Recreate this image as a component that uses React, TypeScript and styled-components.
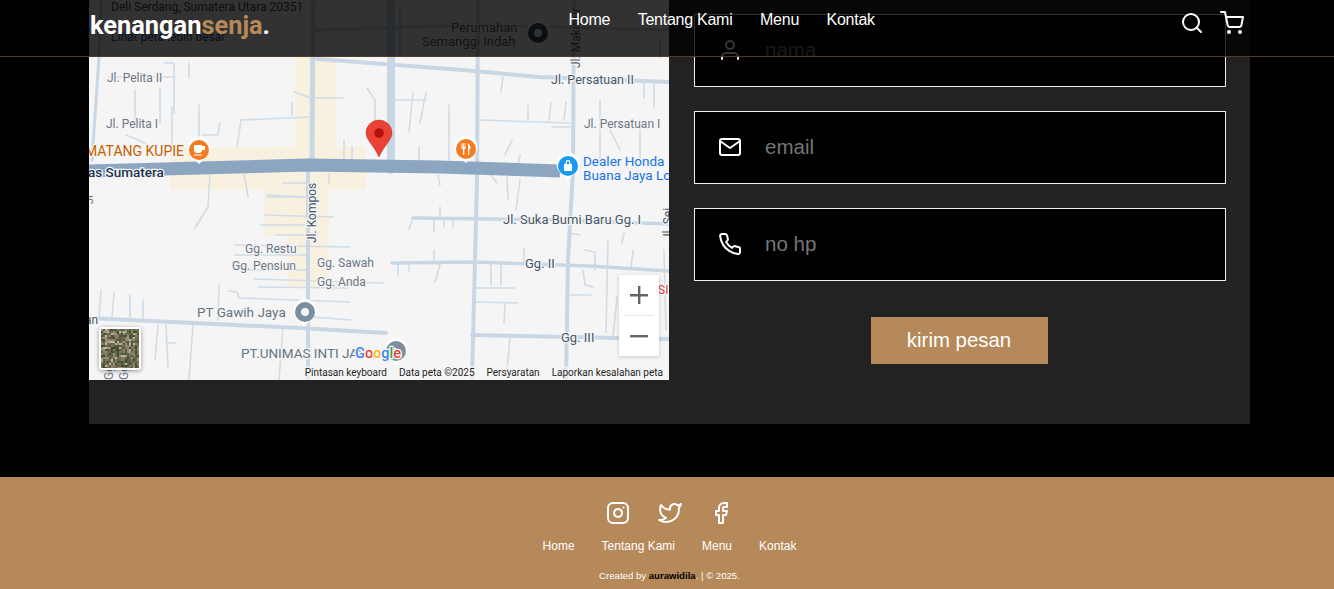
import React from "react";
import styled, { createGlobalStyle } from "styled-components";
import { FiUser, FiMail, FiPhone, FiSearch, FiShoppingCart, FiInstagram, FiTwitter, FiFacebook } from "react-icons/fi";

const Global = createGlobalStyle`
  html, body { margin: 0; padding: 0; background: #000; height: 100%; overflow: hidden; }
  body { font-family: "Liberation Sans", Arial, sans-serif; color: #fff; }
  * { box-sizing: border-box; }
`;

const Page = styled.div`
  position: relative;
  width: 1334px;
  height: 589px;
  overflow: hidden;
  background: #000;
`;

const Navbar = styled.nav`
  position: absolute;
  top: 0;
  left: 0;
  width: 100%;
  height: 57px;
  display: flex;
  align-items: flex-start;
  padding: 0 90px 0 90px;
  background: rgba(1, 1, 1, 0.8);
  border-bottom: 1px solid #513b27;
  z-index: 5;
`;

const Logo = styled.a`
  font-family: Roboto, sans-serif;
  font-weight: 700;
  font-size: 25.4px;
  line-height: 30px;
  margin-top: 10px;
  color: #fff;
  span { color: #b6895b; }
`;

const NavLinks = styled.div`
  display: flex;
  gap: 27.5px;
  margin-left: 298.5px;
  margin-top: 11px;
`;

const NavLink = styled.a`
  font-size: 16px;
  line-height: 18px;
  letter-spacing: -0.25px;
  color: #fff;
`;

const NavIcons = styled.div`
  display: flex;
  align-items: center;
  gap: 16px;
  margin-left: auto;
  margin-top: 11px;
  svg { display: block; }
`;

const Contact = styled.section`
  display: grid;
  grid-template-columns: 580px 1fr;
  width: 1161px;
  height: 424px;
  margin-left: 89px;
  background: #222;
`;

const MapFrame = styled.div`
  position: relative;
  width: 580px;
  height: 380px;
  overflow: hidden;
  background: #f5f5f5;
  svg { display: block; }
`;

const ZoomControl = styled.div`
  position: absolute;
  right: 10px;
  bottom: 24px;
  width: 40px;
  height: 81px;
  background: #fff;
  box-shadow: 0 1px 4px rgba(0, 0, 0, 0.2);
  display: flex;
  flex-direction: column;
  align-items: center;
  color: #666;
`;

const ZoomButton = styled.div`
  flex: 1;
  display: flex;
  align-items: center;
  justify-content: center;
`;

const ZoomDivider = styled.div`
  width: 30px;
  height: 1px;
  background: #e6e6e6;
`;

const SatelliteThumb = styled.div`
  position: absolute;
  left: 10px;
  bottom: 10px;
  width: 42px;
  height: 43px;
  border: 2px solid #fff;
  border-radius: 3px;
  overflow: hidden;
  background: #6f6b58;
  box-shadow: 0 1px 4px rgba(0, 0, 0, 0.4);
`;

const Attribution = styled.div`
  position: absolute;
  right: 0;
  bottom: 0;
  height: 14px;
  display: flex;
  gap: 12px;
  padding: 0 6px;
  font-family: Roboto, sans-serif;
  font-size: 10px;
  line-height: 14px;
  color: #1f1f1f;
  background: rgba(245, 245, 245, 0.7);
`;

const Form = styled.form`
  display: flex;
  flex-direction: column;
  padding: 14px 24px 0 25px;
`;

const Field = styled.label`
  display: flex;
  align-items: center;
  gap: 23px;
  height: 73px;
  margin-bottom: 24px;
  padding: 0 0 2px 23px;
  background: #000;
  border: 1px solid #eee;
  color: #fff;
  svg { flex: none; }
`;

const Input = styled.input`
  flex: 1;
  min-width: 0;
  background: transparent;
  border: 0;
  outline: 0;
  padding: 0;
  font-family: "Liberation Sans", Arial, sans-serif;
  font-size: 20.5px;
  color: #fff;
  &::placeholder { color: #757575; opacity: 1; }
`;

const SendButton = styled.button`
  align-self: center;
  width: 177px;
  height: 47px;
  margin: 12px 2px 0 0;
  padding: 0 0 1px;
  border: 0;
  background: #b6895b;
  color: #fff;
  font-family: "Liberation Sans", Arial, sans-serif;
  font-size: 20.4px;
`;

const Footer = styled.footer`
  display: flex;
  flex-direction: column;
  align-items: center;
  height: 112px;
  margin-top: 53px;
  padding: 24px 0 0 5px;
  background: #b6895b;
`;

const Socials = styled.div`
  display: flex;
  gap: 27.5px;
  color: #fff;
  svg { display: block; }
`;

const FooterLinks = styled.div`
  display: flex;
  gap: 27px;
  margin-top: 14px;
`;

const FooterLink = styled.a`
  font-size: 12px;
  line-height: 14px;
  color: #fff;
`;

const Credit = styled.p`
  margin: 17px 0 0;
  font-size: 9.6px;
  line-height: 12px;
  color: #fff;
  b { font-weight: 700; color: #000; }
`;

const ROAD = "#c9d7e4";
const ALLEY = "#d0dce7";

const bigRoads: [string, number][] = [
  ["391,0 391,170", 8],
  ["313,0 312,165", 5],
  ["308,165 308,380", 4],
  ["317,59 463,70 539,77 669,82", 4],
  ["478,0 477,180 472,380", 4],
  ["574,0 573,170 568,260 566,380", 4],
  ["92,160 99,57 101,0", 3],
  ["392,263 474,262 590,266 669,271", 3.5],
  ["413,218 560,220 669,224", 3.5],
  ["472,335 669,339", 4],
  ["89,318 300,328 386,333", 4],
  ["313,30 470,25 669,30", 3],
  ["400,10 400,55", 2],
  ["660,40 660,57", 2],
];

const alleys: string[] = [
  "164,63 174,63 174,113", "109,77 176,77", "189,63 189,78", "135,90 135,123", "160,88 160,123",
  "172,107 172,147", "199,105 199,147", "241,120 310,117", "241,120 237,147", "202,135 218,135 220,123",
  "126,135 145,143", "292,103 292,115", "311,98 344,98", "294,92 311,98", "367,88 375,100 375,123",
  "394,100 426,100", "413,93 409,132", "426,93 420,123", "449,105 449,160", "480,120 570,123",
  "503,77 501,92", "528,105 528,120", "551,103 549,120", "566,102 564,120", "552,127 571,127",
  "644,83 644,98", "654,83 654,107", "344,140 344,160", "352,147 352,160", "419,147 419,163",
  "512,140 505,155", "520,155 518,165", "610,130 620,150", "640,120 640,160", "600,100 600,160",
  "210,175 208,207 195,228", "244,173 248,197", "283,183 310,183", "267,197 310,197", "329,174 329,183",
  "438,175 440,185", "491,175 497,183", "507,177 508,200", "520,180 516,210",
  "266,195 310,197", "264,215 333,217", "260,225 310,225", "277,235 310,235", "235,245 350,247",
  "235,255 306,255", "241,270 306,270", "254,279 384,283", "258,287 348,288",
  "229,291 237,292 239,298 350,302", "313,317 351,320", "409,229 413,218", "440,207 440,218",
  "434,218 434,232", "444,218 444,227", "453,218 453,227", "398,262 398,275", "409,262 409,272",
  "434,250 434,262 440,265 435,282", "491,265 491,285", "501,265 501,285", "476,288 514,288",
  "476,302 518,303", "505,303 504,323", "510,338 507,370", "570,233 580,235", "583,270 585,285 593,287",
  "570,295 591,295", "585,250 595,252 595,270", "608,240 606,333", "617,297 613,337", "624,233 622,243",
  "633,250 631,268", "664,250 666,330", "524,248 524,262",
  "101,290 99,318", "114,292 112,318", "130,295 130,318", "143,300 143,320", "219,285 218,320",
  "158,325 155,360", "166,325 168,367", "168,343 176,343", "193,325 189,380", "283,328 279,380",
];

const Road = styled.polyline`
  fill: none;
  stroke-linejoin: round;
  stroke-linecap: round;
`;

const labelHalo = { paintOrder: "stroke", stroke: "#f5f5f5", strokeWidth: 2.5 } as const;

const Label = ({ x, y, c = "#6b7785", s = 12, w = 400, r, children }: { x: number; y: number; c?: string; s?: number; w?: number; r?: number; children: React.ReactNode }) => (
  <text x={x} y={y} fill={c} fontSize={s} fontWeight={w} fontFamily="Roboto, sans-serif" style={labelHalo} transform={r ? `rotate(${r} ${x} ${y})` : undefined}>
    {children}
  </text>
);

const Pin = ({ x, y, c, children }: { x: number; y: number; c: string; children?: React.ReactNode }) => (
  <g transform={`translate(${x} ${y})`}>
    <path d="M0 14 L-6 8 A11.5 11.5 0 1 1 6 8 Z" fill="#fff" />
    <circle r="10" fill={c} />
    {children}
  </g>
);

const MapDrawing = () => (
  <svg width="580" height="380" viewBox="89 0 580 380" xmlns="http://www.w3.org/2000/svg">
    <rect x="89" y="0" width="580" height="380" fill="#f5f5f5" />
    <g fill="#f8f1df">
      <rect x="295" y="57" width="40" height="95" />
      <rect x="170" y="147" width="196" height="43" />
      <rect x="264" y="190" width="65" height="46" />
      <rect x="287" y="236" width="42" height="52" />
    </g>
    {alleys.map((p, i) => <Road key={i} points={p} stroke={ALLEY} strokeWidth={1.6} />)}
    {bigRoads.map(([p, w], i) => <Road key={i} points={p} stroke={ROAD} strokeWidth={w} />)}
    <polyline points="89,171 200,168 308,165 440,167 560,171" fill="none" stroke="#8ca6c1" strokeWidth="13" />

    <Label x={111} y={11} c="#3c3c3c">Deli Serdang, Sumatera Utara 20351</Label>
    <Label x={111} y={41} c="#1a4e9e">Lihat peta lebih besar</Label>
    <Label x={451} y={32} s={13} c="#55606c">Perumahan</Label>
    <Label x={422} y={46} s={13} c="#55606c">Semanggi Indah</Label>
    <Pin x={538} y={33} c="#37474f"><circle r="4" fill="#f5f5f5" /></Pin>
    <Label x={580} y={68} c="#55606c" r={-90}>Jl. Makmur</Label>

    <Label x={107} y={82}>Jl. Pelita II</Label>
    <Label x={106} y={128}>Jl. Pelita I</Label>
    <Label x={551} y={84} s={12.5} c="#46566a">Jl. Persatuan II</Label>
    <Label x={584} y={128}>Jl. Persatuan I</Label>
    <Label x={85} y={156} s={14} c="#c95e00">MATANG KUPIE</Label>
    <Label x={88} y={177} s={13.5} w={500} c="#1c3350">as Sumatera</Label>
    <Label x={316} y={243} c="#46566a" r={-90}>Jl. Kompos</Label>
    <Label x={583} y={166} s={13.5} c="#1a73e8">Dealer Honda</Label>
    <Label x={583} y={180} s={13.5} c="#1a73e8">Buana Jaya Lo</Label>
    <Label x={503} y={224} s={13} c="#46566a">Jl. Suka Bumi Baru Gg. I</Label>
    <Label x={245} y={253}>Gg. Restu</Label>
    <Label x={232} y={270}>Gg. Pensiun</Label>
    <Label x={317} y={267}>Gg. Sawah</Label>
    <Label x={317} y={286}>Gg. Anda</Label>
    <Label x={525} y={268} s={13} c="#46566a">Gg. II</Label>
    <Label x={561} y={342} s={13} c="#46566a">Gg. III</Label>
    <Label x={197} y={317} s={13.5} c="#627585">PT Gawih Jaya</Label>
    <Label x={241} y={358} s={13.5} c="#627585">PT.UNIMAS INTI JAYA</Label>
    <Label x={85} y={324} c="#46566a">an</Label>
    <Label x={658} y={294} c="#e53935">SI</Label>
    <Label x={672} y={240} c="#46566a" r={-90}>Jl. Sei</Label>
    <Label x={113} y={380} c="#6b7785" r={-90}>Gg</Label>
    <Label x={128} y={380} c="#6b7785" r={-90}>Gg</Label>
    <Label x={93} y={204} c="#6b7785" s={11} r={-90}>Jl</Label>

    <Pin x={199} y={150} c="#f47b20">
      <path d="M-5 -5 H3 V1 A3 3 0 0 1 0 3 H-2 A3 3 0 0 1 -5 0 Z M3 -4 H6 V0 H3 M-5 4.5 H3 V5.5 H-5 Z" fill="#fff" />
    </Pin>
    <Pin x={466} y={149} c="#f47b20">
      <path d="M-4.5 -6 V-1.5 Q-4.5 0 -3 0.5 V6 H-1.7 V0.5 Q-0.5 0 -0.5 -1.5 V-6 H-1.3 V-2 H-2 V-6 H-2.8 V-2 H-3.5 V-6 Z M2 -6 Q4.5 -4 4.5 0 H3.3 V6 H2 Z" fill="#fff" />
    </Pin>
    <Pin x={568} y={166} c="#1a9bf0">
      <path d="M-4 -2 H4 V5 H-4 Z M-2.4 -2 V-3.5 A2.4 2.4 0 0 1 2.4 -3.5 V-2 H1.2 V-3.5 A1.2 1.2 0 0 0 -1.2 -3.5 V-2 Z" fill="#fff" />
    </Pin>
    <Pin x={305} y={312} c="#7a8f9e"><circle r="4" fill="#f5f5f5" /></Pin>
    <Pin x={396} y={351} c="#7a8f9e"><path d="M-2 -4 L4 0 L-2 4 Z" fill="#f5f5f5" /></Pin>

    <text x={355} y={358} fontSize="14.5" fontFamily="Roboto, sans-serif" fontWeight="500" style={labelHalo}>
      <tspan fill="#4285f4">G</tspan><tspan fill="#ea4335">o</tspan><tspan fill="#fbbc05">o</tspan><tspan fill="#4285f4">g</tspan><tspan fill="#34a853">l</tspan><tspan fill="#ea4335">e</tspan>
    </text>

    <path d="M379 157 C375 147 366 140 366 133 A13 13 0 0 1 392 133 C392 140 383 147 379 157 Z" fill="#ea4335" stroke="#c5221f" strokeWidth="0.5" />
    <circle cx="379" cy="133" r="4.8" fill="#b3120f" />
  </svg>
);

const satColors = ["#55603f", "#8f8069", "#46512f", "#a39580", "#66704e", "#75624f", "#bdb4a4", "#3d4a2f", "#857663", "#6c6a55", "#93876f", "#4f5b3c"];
const satPatches: [number, number, number, string][] = [];
{
  let seed = 7;
  const next = () => { seed = (seed * 1103515245 + 12345) & 0x7fffffff; return seed / 0x7fffffff; };
  for (let y = 0; y < 39; y += 2) {
    for (let x = 0; x < 38; x += 2) {
      satPatches.push([x, y, 2 + Math.floor(next() * 2), satColors[Math.floor(next() * satColors.length)]]);
    }
  }
}

const Satellite = () => (
  <svg width="38" height="39" viewBox="0 0 38 39">
    {satPatches.map(([x, y, w, c], i) => <rect key={i} x={x} y={y} width={w} height={2} fill={c} />)}
  </svg>
);

export default function App() {
  return (
    <Page>
      <Global />
      <Navbar>
        <Logo>kenangan<span>senja</span>.</Logo>
        <NavLinks>
          <NavLink>Home</NavLink>
          <NavLink>Tentang Kami</NavLink>
          <NavLink>Menu</NavLink>
          <NavLink>Kontak</NavLink>
        </NavLinks>
        <NavIcons>
          <FiSearch size={24} />
          <FiShoppingCart size={24} />
        </NavIcons>
      </Navbar>

      <Contact>
        <MapFrame>
          <MapDrawing />
          <ZoomControl>
            <ZoomButton>
              <svg width="18" height="18" viewBox="0 0 18 18"><path d="M8 0h2.4v8H18v2.4h-7.6V18H8v-7.6H0V8h8z" fill="#666" /></svg>
            </ZoomButton>
            <ZoomDivider />
            <ZoomButton>
              <svg width="18" height="18" viewBox="0 0 18 18"><path d="M0 8h18v2.4H0z" fill="#666" /></svg>
            </ZoomButton>
          </ZoomControl>
          <SatelliteThumb><Satellite /></SatelliteThumb>
          <Attribution>
            <span>Pintasan keyboard</span>
            <span>Data peta ©2025</span>
            <span>Persyaratan</span>
            <span>Laporkan kesalahan peta</span>
          </Attribution>
        </MapFrame>
        <Form>
          <Field><FiUser size={24} /><Input placeholder="nama" /></Field>
          <Field><FiMail size={24} /><Input placeholder="email" /></Field>
          <Field><FiPhone size={24} /><Input placeholder="no hp" /></Field>
          <SendButton type="button">kirim pesan</SendButton>
        </Form>
      </Contact>

      <Footer>
        <Socials>
          <FiInstagram size={24} />
          <FiTwitter size={24} />
          <FiFacebook size={24} />
        </Socials>
        <FooterLinks>
          <FooterLink>Home</FooterLink>
          <FooterLink>Tentang Kami</FooterLink>
          <FooterLink>Menu</FooterLink>
          <FooterLink>Kontak</FooterLink>
        </FooterLinks>
        <Credit>Created by <b>aurawidila</b>. | © 2025.</Credit>
      </Footer>
    </Page>
  );
}
